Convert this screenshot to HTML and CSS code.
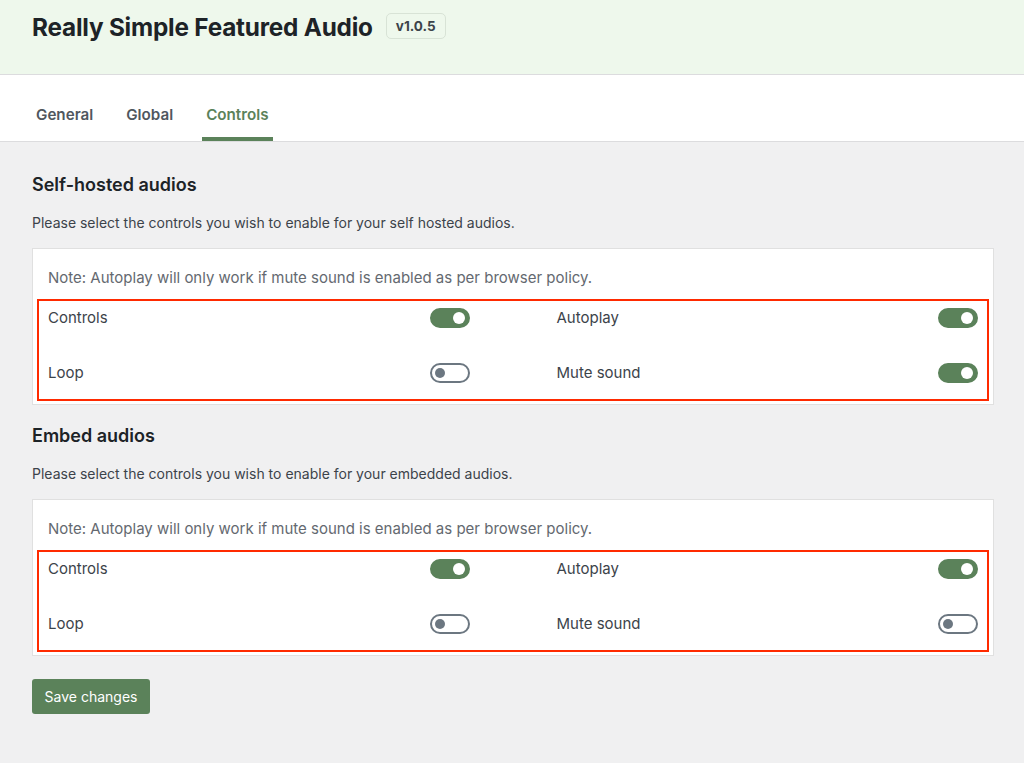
FILE: index.html
```html
<!DOCTYPE html>
<html lang="en">
<head>
<meta charset="utf-8">
<title>Really Simple Featured Audio</title>
<link rel="stylesheet" href="styles.css">
</head>
<body>
<header class="app-header">
  <h1 class="app-title">Really Simple Featured Audio</h1>
  <span class="version">v1.0.5</span>
</header>
<nav class="tabs">
  <a class="tab">General</a>
  <a class="tab">Global</a>
  <a class="tab active">Controls</a>
</nav>
<main class="content">
  <section class="section">
    <h2 class="section-title">Self-hosted audios</h2>
    <p class="section-desc">Please select the controls you wish to enable for your self hosted audios.</p>
    <div class="card">
      <p class="note">Note: Autoplay will only work if mute sound is enabled as per browser policy.</p>
      <div class="options">
        <div class="option"><span>Controls</span><span class="toggle on"></span></div>
        <div class="option"><span>Autoplay</span><span class="toggle on"></span></div>
        <div class="option"><span>Loop</span><span class="toggle"></span></div>
        <div class="option"><span>Mute sound</span><span class="toggle on"></span></div>
      </div>
    </div>
  </section>
  <section class="section">
    <h2 class="section-title">Embed audios</h2>
    <p class="section-desc">Please select the controls you wish to enable for your embedded audios.</p>
    <div class="card">
      <p class="note">Note: Autoplay will only work if mute sound is enabled as per browser policy.</p>
      <div class="options">
        <div class="option"><span>Controls</span><span class="toggle on"></span></div>
        <div class="option"><span>Autoplay</span><span class="toggle on"></span></div>
        <div class="option"><span>Loop</span><span class="toggle"></span></div>
        <div class="option"><span>Mute sound</span><span class="toggle"></span></div>
      </div>
    </div>
  </section>
  <button class="save">Save changes</button>
</main>
</body>
</html>
```
FILE: styles.css
```css
* { box-sizing: border-box; }
html, body { margin: 0; padding: 0; }
body {
  background: #f0f0f1;
  font-family: Inter, "Noto Sans", sans-serif;
  color: #3c434a;
  font-size: 14px;
  min-height: 763px;
}
.app-header {
  background: #eef8ec;
  height: 75px;
  border-bottom: 1px solid #dcdcde;
  display: flex;
  align-items: flex-start;
  padding: 12px 32px 0;
  gap: 13px;
}
.app-title {
  margin: 0;
  font-size: 24.3px;
  line-height: 30px;
  font-weight: 700;
  color: #1d2327;
  letter-spacing: -0.2px;
}
.version {
  margin-top: 1px;
  height: 26px;
  line-height: 24px;
  padding: 0 9px;
  border: 1px solid #d8e3d6;
  border-radius: 5px;
  font-size: 13.5px;
  font-weight: 700;
  color: #3c434a;
}
.tabs {
  background: #fff;
  border-bottom: 1px solid #dcdcde;
  height: 67px;
  display: flex;
  padding-left: 32px;
  gap: 25px;
}
.tab {
  padding: 30px 4px 12px;
  line-height: 20px;
  font-size: 15.2px;
  font-weight: 600;
  color: #50575e;
  border-bottom: 4px solid transparent;
}
.tab.active {
  color: #5b825a;
  border-bottom-color: #5b825a;
}
.content {
  padding: 31px 30px 40px 32px;
}
.section-title {
  margin: 0;
  font-size: 18px;
  line-height: 24px;
  font-weight: 600;
  color: #1d2327;
}
.section-desc {
  margin: 16px 0 15px;
  line-height: 20px;
}
.section + .section { margin-top: 19px; }
.card {
  background: #fff;
  border: 1px solid #e0e0e0;
  padding: 19px 15px 3px;
}
.note {
  margin: 0 0 11px;
  line-height: 20px;
  font-size: 15px;
  color: #646970;
}
.options {
  margin: 0 -11px;
  border: 2px solid #ff2a00;
  padding: 7px 9px 16px;
  display: grid;
  grid-template-columns: 1fr 1fr;
  column-gap: 87px;
  row-gap: 35px;
}
.option {
  display: flex;
  justify-content: space-between;
  align-items: center;
  height: 20px;
  line-height: 20px;
  font-size: 15px;
  color: #3c434a;
}
.toggle {
  width: 40px;
  height: 20px;
  border-radius: 10px;
  border: 2px solid #6c7781;
  background: #fff;
  position: relative;
}
.toggle::after {
  content: "";
  position: absolute;
  top: 3px;
  left: 3px;
  width: 10px;
  height: 10px;
  border-radius: 50%;
  background: #6c7781;
}
.toggle.on {
  background: #5b825a;
  border-color: #5b825a;
}
.toggle.on::after {
  left: auto;
  right: 3px;
  top: 2px;
  width: 12px;
  height: 12px;
  background: #fff;
}
.save {
  margin-top: 23px;
  background: #5b825a;
  color: #fff;
  border: none;
  border-radius: 3px;
  height: 35px;
  width: 118px;
  font-family: inherit;
  font-size: 14px;
}
```
